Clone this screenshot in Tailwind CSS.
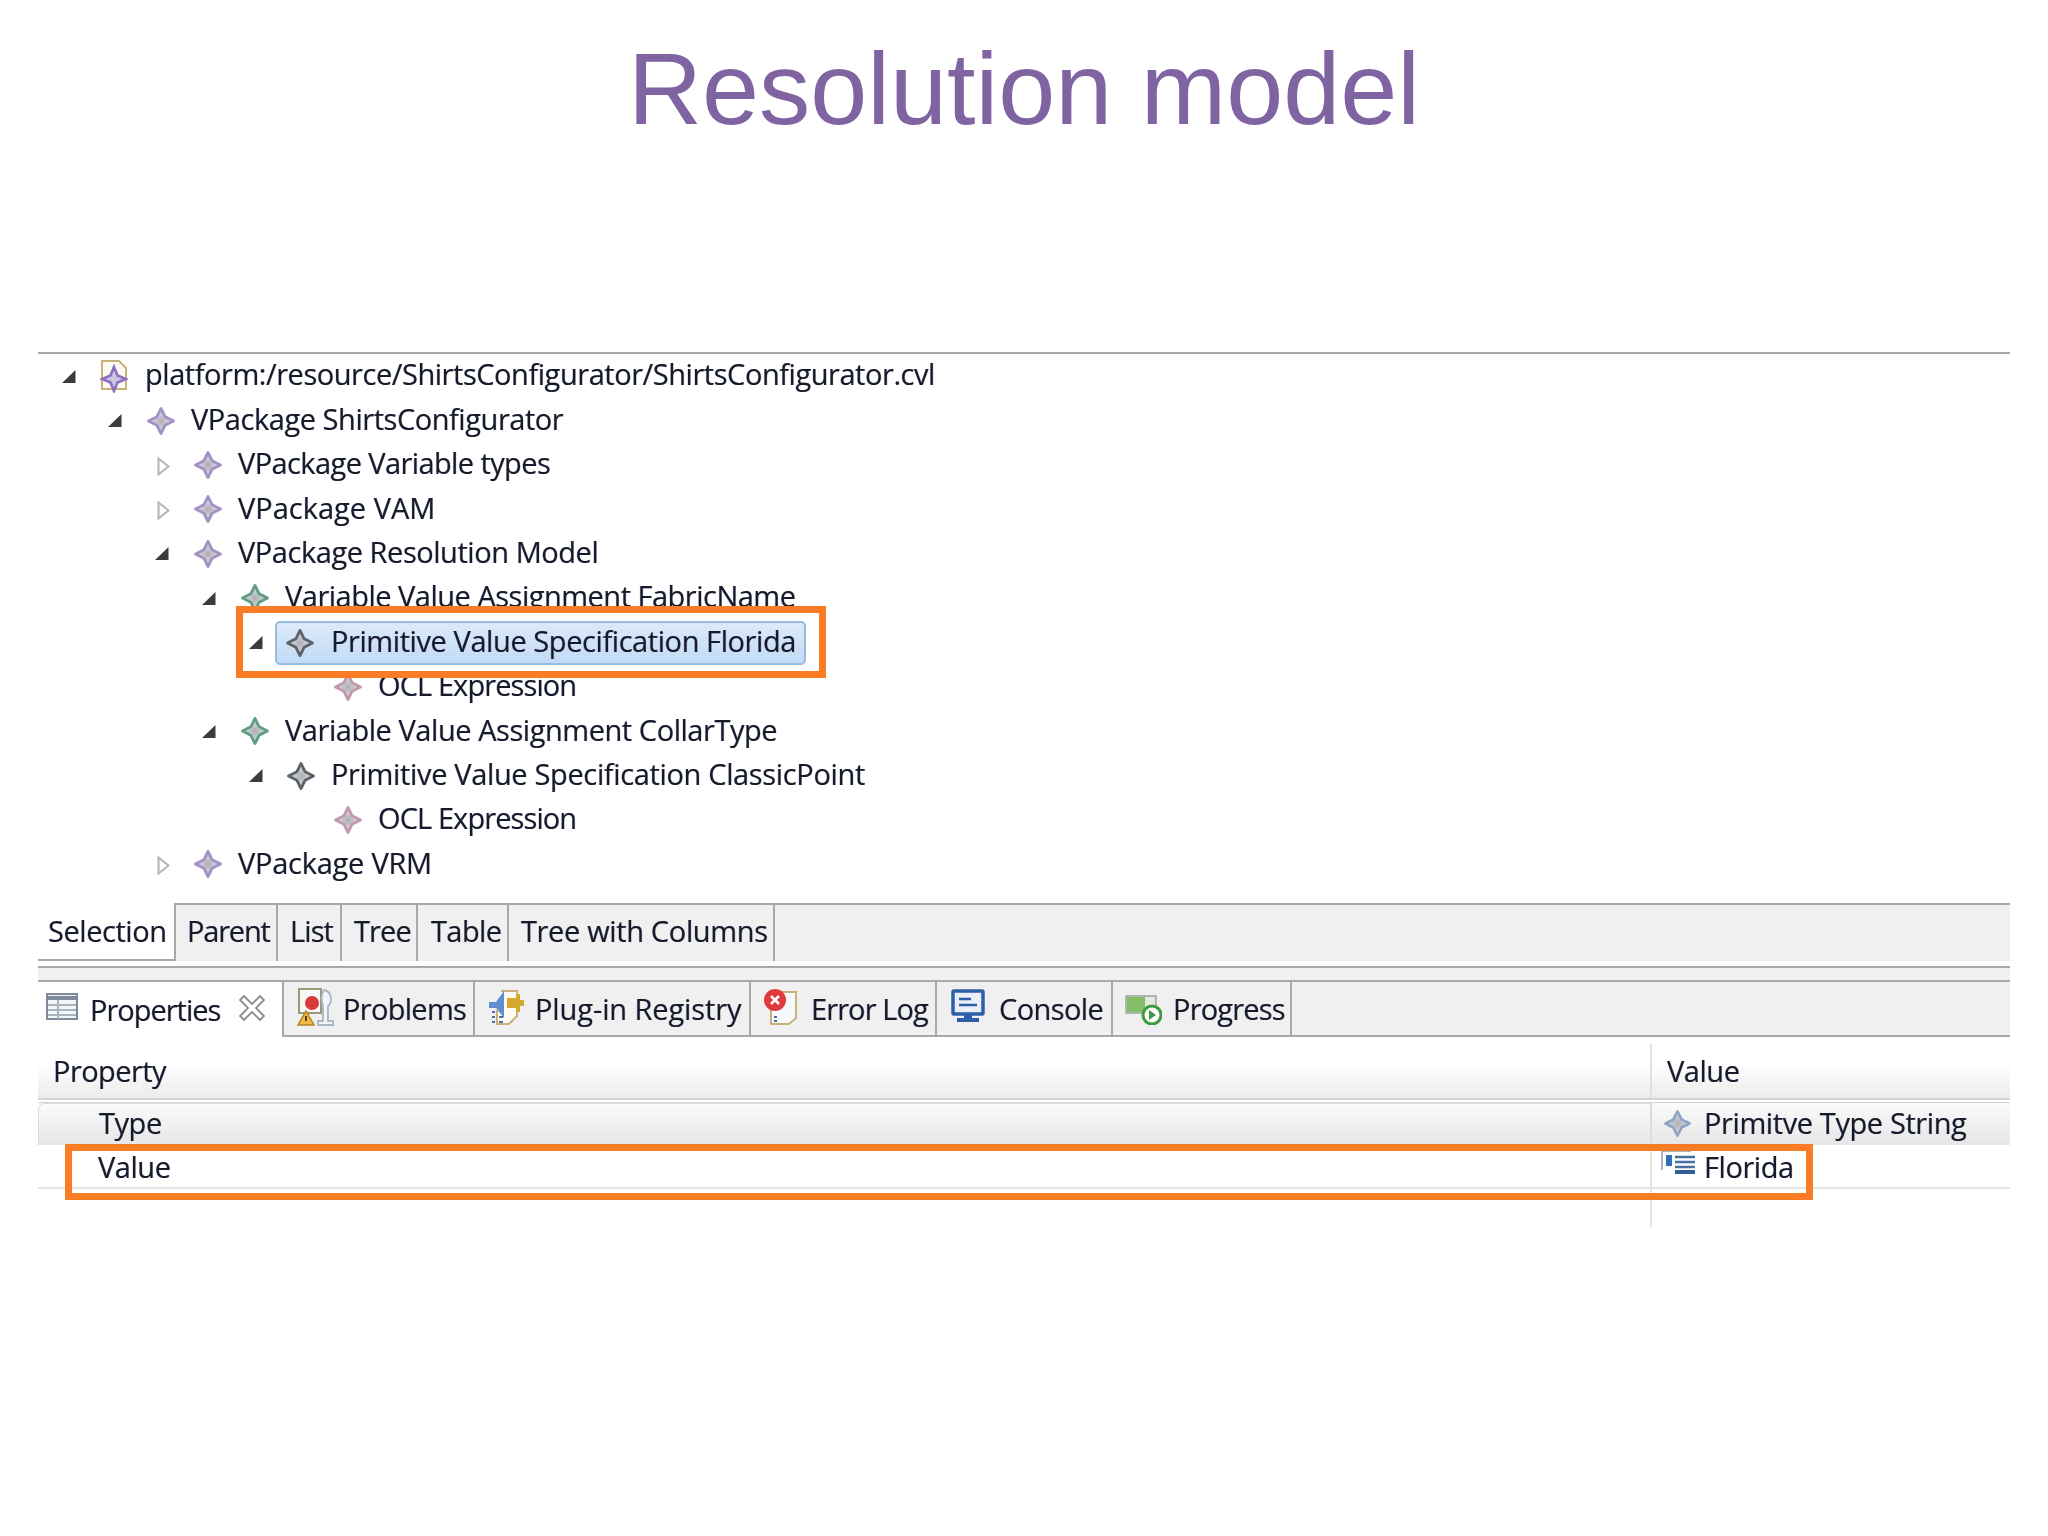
<!DOCTYPE html>
<html lang="en">
<head>
<meta charset="UTF-8">
<title>Resolution model</title>
<script src="https://cdn.jsdelivr.net/npm/@tailwindcss/browser@4"></script>
</head>
<body class="bg-white w-[2048px] h-[1536px] overflow-hidden font-['Open_Sans',sans-serif] text-[#141b2b]">

<svg class="absolute w-0 h-0">
  <defs>
    <radialGradient id="starFill"><stop offset="0" stop-color="#aeaeb6"/><stop offset="0.6" stop-color="#cfcfd6"/><stop offset="1" stop-color="#eeeef2"/></radialGradient>
  </defs>
  <symbol id="star" viewBox="0 0 28 28"><path d="M14 1.500 L18.200 9.800 L26.500 14 L18.200 18.200 L14 26.500 L9.800 18.200 L1.500 14 L9.800 9.800 Z" fill="url(#starFill)" stroke="currentColor" stroke-width="2.800" stroke-linejoin="round"/></symbol>
  <symbol id="open" viewBox="0 0 15 15"><path d="M14.500 1 V14 H1 Z" fill="#3c3c3c"/></symbol>
  <symbol id="closed" viewBox="0 0 13 19"><path d="M1.500 1.500 L11.500 9.500 L1.500 17.500 Z" fill="#fff" stroke="#b4b4b4" stroke-width="2"/></symbol>
</svg>

<h1 class="h-[352px] pt-[27px] text-center text-[#8064a2] text-[102.500px] leading-[124px] font-['Liberation_Sans',sans-serif] font-normal">Resolution model</h1>

<main class="blur-[0.5px] text-[29px] tracking-[-0.45px] [text-shadow:0.5px_0_0_rgba(110,40,50,0.3),-0.5px_0_0_rgba(40,70,140,0.3)]">
  <!-- tree -->
  <section class="h-[551px]">
    <div class="ml-[38px] w-[1972px] border-t-2 border-[#a8a8a8]"></div>
    <div class="flex items-center h-[44.400px] pl-[61px]">
      <svg class="w-[15px] h-[15px] mr-[24px]"><use href="#open"/></svg>
      <svg class="w-[28px] h-[34px] mr-[17px]" viewBox="0 0 28 34">
        <path d="M2 2 H19 L26 9 V30 H2 Z" fill="#fdfbf4" stroke="#c6b27a" stroke-width="2"/>
        <path d="M14 8 L17.500 16.500 L26 20 L17.500 23.500 L14 32 L10.500 23.500 L2 20 L10.500 16.500 Z" fill="#cfc4e2" stroke="#8b6fc0" stroke-width="2.600"/>
      </svg>
      <span class="pb-[4px]">platform:/resource/ShirtsConfigurator/ShirtsConfigurator.cvl</span>
    </div>
    <div class="flex items-center h-[44.400px] pl-[107px]">
      <svg class="w-[15px] h-[15px] mr-[25px]"><use href="#open"/></svg>
      <svg class="w-[28px] h-[28px] mr-[16px] text-[#a491c6]"><use href="#star"/></svg>
      <span class="pb-[4px]">VPackage ShirtsConfigurator</span>
    </div>
    <div class="flex items-center h-[44.400px] pl-[157px]">
      <svg class="w-[13px] h-[19px] mr-[24px] mt-[3px]"><use href="#closed"/></svg>
      <svg class="w-[28px] h-[28px] mr-[16px] text-[#a491c6]"><use href="#star"/></svg>
      <span class="pb-[4px] tracking-[-0.6px]">VPackage Variable types</span>
    </div>
    <div class="flex items-center h-[44.400px] pl-[157px]">
      <svg class="w-[13px] h-[19px] mr-[24px] mt-[3px]"><use href="#closed"/></svg>
      <svg class="w-[28px] h-[28px] mr-[16px] text-[#a491c6]"><use href="#star"/></svg>
      <span class="pb-[4px] tracking-[0px]">VPackage VAM</span>
    </div>
    <div class="flex items-center h-[44.400px] pl-[154px]">
      <svg class="w-[15px] h-[15px] mr-[25px]"><use href="#open"/></svg>
      <svg class="w-[28px] h-[28px] mr-[16px] text-[#a491c6]"><use href="#star"/></svg>
      <span class="pb-[4px]">VPackage Resolution Model</span>
    </div>
    <div class="flex items-center h-[44.400px] pl-[201px]">
      <svg class="w-[15px] h-[15px] mr-[25px]"><use href="#open"/></svg>
      <svg class="w-[28px] h-[28px] mr-[16px] text-[#5f9d86]"><use href="#star"/></svg>
      <span class="pb-[4px] tracking-[-0.5px]">Variable Value Assignment FabricName</span>
    </div>
    <div class="relative z-10 flex items-center h-[44.400px] pl-[248px]">
      <div class="absolute left-[236px] top-[-14px] w-[590px] h-[72px] bg-white border-[7px] border-[#fa7d26]"></div>
      <svg class="relative w-[15px] h-[15px] mr-[12px]"><use href="#open"/></svg>
      <div class="relative flex items-center w-[531px] h-[44px] pl-[9px] rounded-[5px] border-2 border-[#9bbbdc] bg-linear-to-b from-[#dceafa] to-[#c2dbf6]">
        <svg class="w-[28px] h-[28px] mr-[17px] text-[#5c6268]"><use href="#star"/></svg>
        <span class="pb-[4px] tracking-[-0.42px]">Primitive Value Specification Florida</span>
      </div>
    </div>
    <div class="flex items-center h-[44.400px] pl-[334px]">
      <svg class="w-[28px] h-[28px] mr-[16px] text-[#c298ac]"><use href="#star"/></svg>
      <span class="pb-[4px] tracking-[-0.9px]">OCL Expression</span>
    </div>
    <div class="flex items-center h-[44.400px] pl-[201px]">
      <svg class="w-[15px] h-[15px] mr-[25px]"><use href="#open"/></svg>
      <svg class="w-[28px] h-[28px] mr-[16px] text-[#5f9d86]"><use href="#star"/></svg>
      <span class="pb-[4px]">Variable Value Assignment CollarType</span>
    </div>
    <div class="flex items-center h-[44.400px] pl-[248px]">
      <svg class="w-[15px] h-[15px] mr-[24px]"><use href="#open"/></svg>
      <svg class="w-[28px] h-[28px] mr-[16px] text-[#5c6268]"><use href="#star"/></svg>
      <span class="pb-[4px] tracking-[-0.35px]">Primitive Value Specification ClassicPoint</span>
    </div>
    <div class="flex items-center h-[44.400px] pl-[334px]">
      <svg class="w-[28px] h-[28px] mr-[16px] text-[#c298ac]"><use href="#star"/></svg>
      <span class="pb-[4px] tracking-[-0.9px]">OCL Expression</span>
    </div>
    <div class="flex items-center h-[44.400px] pl-[157px]">
      <svg class="w-[13px] h-[19px] mr-[24px] mt-[3px]"><use href="#closed"/></svg>
      <svg class="w-[28px] h-[28px] mr-[16px] text-[#a491c6]"><use href="#star"/></svg>
      <span class="pb-[4px] tracking-[-0.25px]">VPackage VRM</span>
    </div>
  </section>

  <div class="ml-[38px] w-[1972px]">
    <!-- viewer tabs -->
    <div class="flex h-[58px]">
      <div class="w-[136px] flex items-center pl-[10px] bg-white border-b-2 border-[#a8a8a8]">Selection</div>
      <div class="w-[104px] flex items-center pl-[11px] pb-[4px] tracking-[-1.2px] bg-[#f0f0f0] border-t-2 border-l-2 border-r-2 border-[#a8a8a8]">Parent</div>
      <div class="w-[64px] flex items-center pl-[12px] pb-[4px] tracking-[-0.9px] bg-[#f0f0f0] border-t-2 border-r-2 border-[#a8a8a8]">List</div>
      <div class="w-[76px] flex items-center pl-[12px] pb-[4px] tracking-[-0.9px] bg-[#f0f0f0] border-t-2 border-r-2 border-[#a8a8a8]">Tree</div>
      <div class="w-[91px] flex items-center pl-[13px] pb-[4px] tracking-[-0.6px] bg-[#f0f0f0] border-t-2 border-r-2 border-[#a8a8a8]">Table</div>
      <div class="w-[266px] flex items-center pl-[12px] pb-[4px] tracking-[-0.35px] bg-[#f0f0f0] border-t-2 border-r-2 border-[#a8a8a8]">Tree with Columns</div>
      <div class="flex-1 bg-[#f0f0f0] border-t-2 border-[#a8a8a8]"></div>
    </div>
    <div class="mt-[5px] h-[14px] bg-[#f0f0f0] border-t-2 border-[#a8a8a8]"></div>

    <!-- view tabs -->
    <div class="flex h-[57px] border-t-2 border-[#a8a8a8]">
      <div class="w-[244px] flex items-center pl-[8px] bg-white">
        <svg class="w-[32px] h-[27px] mr-[12px] -mt-[6px]" viewBox="0 0 32 27">
          <rect x="1" y="1" width="30" height="25" fill="#f4f6f8" stroke="#7c8a9c" stroke-width="2"/>
          <path d="M1 3 H31 V7 H1 Z" fill="#7c8a9c"/>
          <path d="M2 12 H30 M2 17 H30 M2 22 H30 M12 7 V26" stroke="#a9b4c2" stroke-width="2"/>
        </svg>
        <span class="tracking-[-1px]">Properties</span>
        <svg class="w-[26px] h-[26px] ml-[19px] -mt-[4px]" viewBox="0 0 26 26">
          <path d="M5 1 L13 9 L21 1 L25 5 L17 13 L25 21 L21 25 L13 17 L5 25 L1 21 L9 13 L1 5 Z" fill="#fff" stroke="#8c8c8c" stroke-width="1.800"/>
        </svg>
      </div>
      <div class="w-[193px] flex items-center pl-[13px] bg-[#f0f0f0] border-l-2 border-r-2 border-b-2 border-[#a8a8a8]">
        <svg class="w-[37px] h-[40px] mr-[9px] -mt-[4px]" viewBox="0 0 37 40">
          <rect x="2" y="2" width="22" height="24" fill="#f8f8f4" stroke="#9a9a7a" stroke-width="2"/>
          <circle cx="15" cy="16" r="7" fill="#d93a3a"/>
          <path d="M27 3 C36 5 35 16 31 19 V34 H36 V38 H21 V34 H26 V19 C24 14 24 7 27 3 Z" fill="#f2f5f8" stroke="#a9b6c4" stroke-width="1.800"/>
          <path d="M9 24 L17 38 H1 Z" fill="#f0b84a" stroke="#b98320" stroke-width="1.500"/>
          <path d="M9 29 V34" stroke="#5c3d08" stroke-width="2"/>
        </svg>
        <span class="tracking-[-0.7px]">Problems</span>
      </div>
      <div class="w-[276px] flex items-center pl-[12px] bg-[#f0f0f0] border-r-2 border-b-2 border-[#a8a8a8]">
        <svg class="w-[38px] h-[38px] mr-[10px] -mt-[4px]" viewBox="0 0 38 38">
          <path d="M14 3 H30 V28 L22 36 H10 V22" fill="#fdfbf2" stroke="#c6b27a" stroke-width="2"/>
          <path d="M2 14 L9 14 L17 3 V30 L9 20 L2 20 Z" fill="#5f8fd0"/>
          <path d="M20 10 H29 V6 H33 V12 H37 V18 H33 V24 H29 V20 H20 Z" fill="#d5a92f"/>
          <path d="M5 24 H8 M5 29 H8 M5 34 H8 M12 29 H16 M12 34 H16" stroke="#4a6fa8" stroke-width="2"/>
        </svg>
        <span class="tracking-[-0.1px]">Plug-in Registry</span>
      </div>
      <div class="w-[186px] flex items-center pl-[12px] bg-[#f0f0f0] border-r-2 border-b-2 border-[#a8a8a8]">
        <svg class="w-[36px] h-[38px] mr-[12px] -mt-[4px]" viewBox="0 0 36 38">
          <path d="M14 4 H33 V30 L26 36 H8 V22" fill="#f5f9fc" stroke="#c6b27a" stroke-width="2"/>
          <circle cx="12" cy="12" r="11" fill="#e03a3f"/>
          <path d="M8 8 L16 16 M16 8 L8 16" stroke="#fff" stroke-width="2.500"/>
          <path d="M11 29 H14 M11 33 H14" stroke="#54708f" stroke-width="2"/>
        </svg>
        <span class="tracking-[-0.9px]">Error Log</span>
      </div>
      <div class="w-[176px] flex items-center pl-[14px] bg-[#f0f0f0] border-r-2 border-b-2 border-[#a8a8a8]">
        <svg class="w-[34px] h-[34px] mr-[14px] -mt-[6px]" viewBox="0 0 34 34">
          <rect x="2" y="2" width="30" height="23" rx="1" fill="#e8eff8" stroke="#2d5fa8" stroke-width="3.500"/>
          <path d="M8 10 H20 M8 16 H26" stroke="#2d5fa8" stroke-width="2.500"/>
          <path d="M13 26 H21 V29 H28 V33 H6 V29 H13 Z" fill="#2d5fa8"/>
        </svg>
        <span class="tracking-[-0.6px]">Console</span>
      </div>
      <div class="w-[179px] flex items-center pl-[12px] bg-[#f0f0f0] border-r-2 border-b-2 border-[#a8a8a8]">
        <svg class="w-[37px] h-[34px] mr-[11px] -mt-[2px]" viewBox="0 0 37 34">
          <rect x="1" y="5" width="30" height="17" fill="#e6e8e4" stroke="#9aa49a" stroke-width="1.500"/>
          <rect x="2" y="6" width="18" height="15" fill="#86bd6a"/>
          <circle cx="27" cy="24" r="9" fill="#fff" stroke="#3f9a3f" stroke-width="3"/>
          <path d="M24 19 L31 24 L24 29 Z" fill="#3f9a3f"/>
        </svg>
        <span class="tracking-[-0.8px]">Progress</span>
      </div>
      <div class="flex-1 bg-[#f0f0f0] border-b-2 border-[#a8a8a8]"></div>
    </div>

    <!-- properties table -->
    <div class="grid grid-cols-[1614px_1fr] pt-[7px]">
      <div class="h-[54px] flex items-center pl-[15px] tracking-[-0.55px] border-r-2 border-[#e0e0e0] bg-linear-to-b from-white from-35% to-[#ececec]">Property</div>
      <div class="h-[54px] flex items-center pl-[15px] bg-linear-to-b from-white from-35% to-[#ececec]">Value</div>

      <div class="col-span-2 h-[5px] border-t-2 border-b border-[#d4d4d4]"></div>

      <div class="h-[42px] flex items-center pl-[60px] pb-[4px] rounded-tl-[6px] border-l border-t border-[#dcdcdc] border-r-2 bg-linear-to-b from-[#fbfbfb] to-[#e6e6e6]">Type</div>
      <div class="h-[42px] flex items-center pl-[12px] pb-[2px] bg-linear-to-b from-[#fbfbfb] to-[#e6e6e6]">
        <svg class="w-[27px] h-[27px] mr-[13px] text-[#8ea6c4]"><use href="#star"/></svg>
        <span class="tracking-[-0.4px]">Primitve Type String</span>
      </div>

      <div class="relative h-[44px] flex items-center pl-[60px] pt-[2px] border-r-2 border-b-2 border-[#e4e4e4]">
        <span>Value</span>
        <div class="absolute left-[27px] top-[-1px] w-[1748px] h-[56px] border-[7px] border-[#fa7d26] z-10"></div>
      </div>
      <div class="h-[44px] flex items-center pl-[9px] pt-[2px] border-b-2 border-[#e4e4e4]">
        <svg class="w-[34px] h-[26px] mr-[9px] -mt-[8px]" viewBox="0 0 34 26">
          <path d="M1 20 V1 H30" fill="none" stroke="#a9b6c4" stroke-width="2"/>
          <rect x="5" y="5" width="6" height="11" fill="#2d6fb8"/>
          <path d="M14 7 H34 M14 12 H34 M14 17 H34" stroke="#45709f" stroke-width="2.500"/>
          <path d="M14 22 H34" stroke="#2d5f96" stroke-width="4"/>
        </svg>
        <span>Florida</span>
      </div>

      <div class="h-[38px] border-r-2 border-[#e4e4e4]"></div>
      <div class="h-[38px]"></div>
    </div>
  </div>
</main>
</body>
</html>
